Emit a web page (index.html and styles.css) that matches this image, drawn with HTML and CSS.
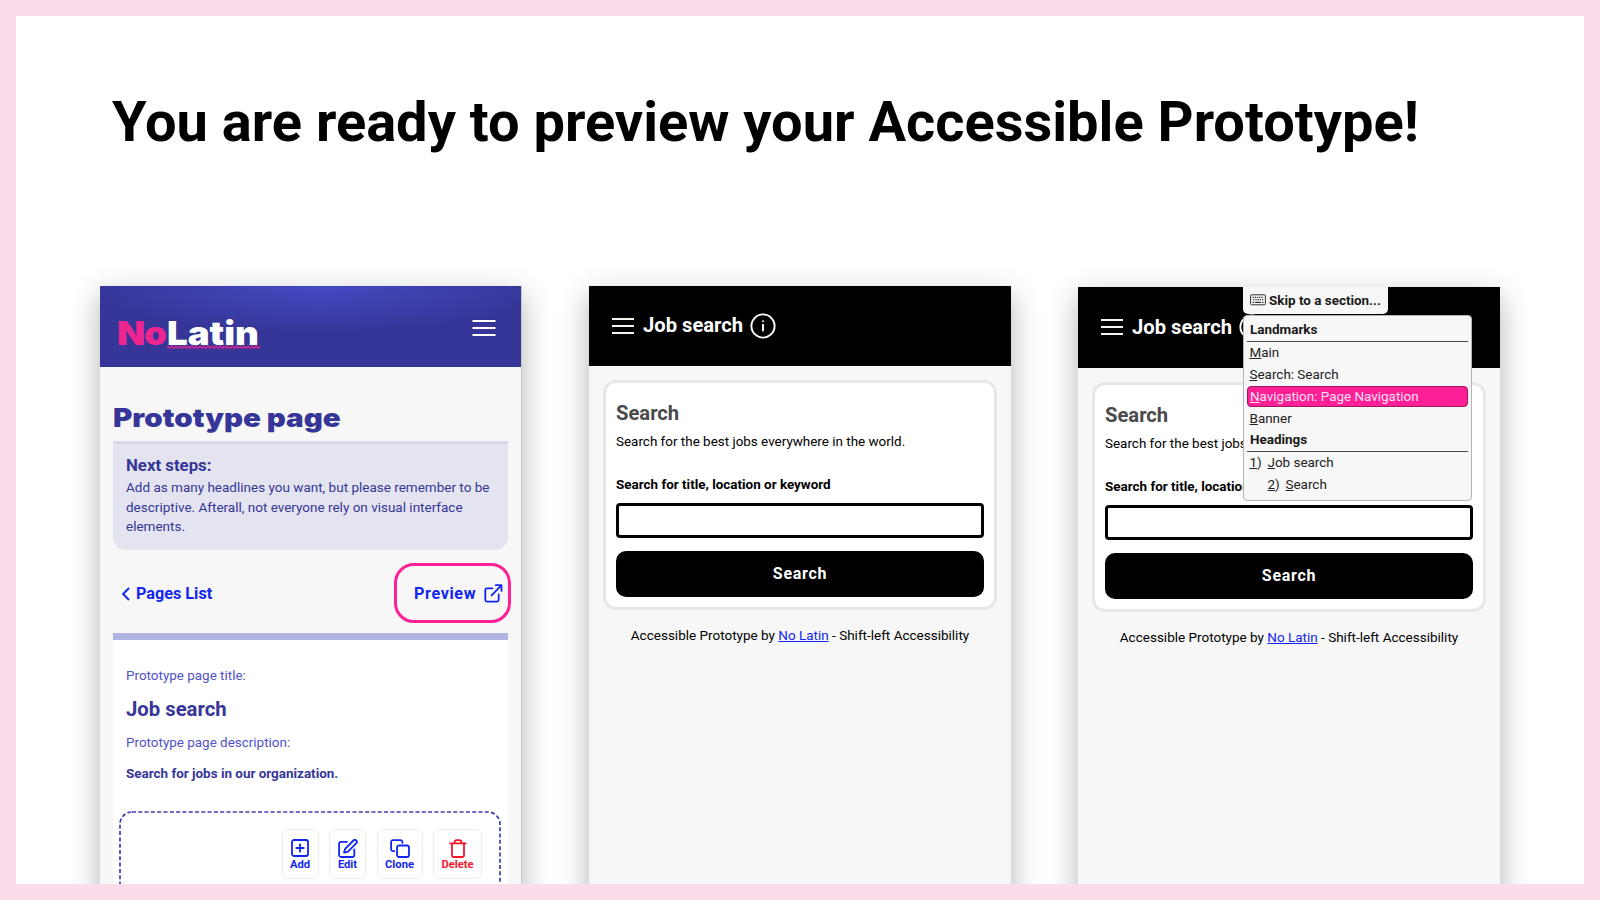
FILE: index.html
```html
<!DOCTYPE html>
<html lang="en">
<head>
<meta charset="utf-8">
<title>Accessible Prototype</title>
<link rel="stylesheet" href="styles.css">
</head>
<body>
<main class="slide">
  <h1 class="title">You are ready to preview your Accessible Prototype!</h1>
  <div class="phones">

    <section class="phone editor">
      <header class="brand-bar">
        <div class="logo"><span class="logo-no">No</span><span class="logo-latin">Latin<svg class="squiggle" width="84" height="4" viewBox="0 0 93 4" preserveAspectRatio="none"><defs><pattern id="wave" width="4" height="4" patternUnits="userSpaceOnUse"><path d="M-1 3.500 1 1l2 2.500L5 1" fill="none" stroke="#e5268f" stroke-width="1.100"/></pattern></defs><rect width="93" height="4" fill="url(#wave)"/></svg></span></div>
        <svg class="burger" width="24" height="18" viewBox="0 0 24 18"><path d="M1.300 2h21.400M1.300 9h21.400M1.300 16h21.400" stroke="#fff" stroke-width="2.200" stroke-linecap="round"/></svg>
      </header>
      <div class="editor-body">
        <h2 class="page-heading">Prototype page</h2>
        <div class="steps">
          <h3 class="steps-title">Next steps:</h3>
          <p class="steps-text">Add as many headlines you want, but please remember to be<br>descriptive. Afterall, not everyone rely on visual interface<br>elements.</p>
        </div>
        <nav class="actions">
          <a class="back"><svg width="8" height="14" viewBox="0 0 8 14"><path d="M7 1 1.200 7 7 13" fill="none" stroke="#1226f0" stroke-width="1.900"/></svg><span>Pages List</span></a>
          <a class="preview"><span class="preview-label">Preview</span><svg width="19" height="19" viewBox="0 0 19 19" fill="none" stroke="#1226f0" stroke-width="1.800" stroke-linecap="round" stroke-linejoin="round"><path d="M8.500 4.300H3A1.700 1.700 0 0 0 1.300 6v10A1.700 1.700 0 0 0 3 17.600h10a1.700 1.700 0 0 0 1.700-1.600v-5.500M11.800 1.200h5.700v5.700M17.300 1.400 7.600 11.300"/></svg></a>
        </nav>
        <div class="panel">
          <p class="field">Prototype page title:</p>
          <p class="field-title">Job search</p>
          <p class="field">Prototype page description:</p>
          <p class="field-strong">Search for jobs in our organization.</p>
          <div class="block">
            <svg class="dashes" width="382" height="120" viewBox="0 0 382 120"><rect x="1" y="1" width="380" height="140" rx="12" fill="none" stroke="#3d3fae" stroke-width="1.700" stroke-dasharray="4 2.300"/></svg>
            <div class="tools">
              <a class="tool add"><svg width="18" height="18" viewBox="0 0 18 18"><rect x="1" y="1" width="16" height="16" rx="2"/><path d="M9 5.300v7.400M5.300 9h7.400"/></svg><span>Add</span></a>
              <a class="tool edit"><svg width="20" height="19" viewBox="0 0 20 19"><path d="M9 2.800H3A1.900 1.900 0 0 0 1.100 4.700v11.400A1.900 1.900 0 0 0 3 18h11.400a1.900 1.900 0 0 0 1.900-1.900v-5.600M15.400 1.500a1.950 1.950 0 0 1 2.800 2.800l-8.500 8.500-3.600.9.900-3.600z"/></svg><span>Edit</span></a>
              <a class="tool clone"><svg width="20" height="19" viewBox="0 0 20 19"><rect x="7" y="6.500" width="12" height="11.500" rx="2"/><path d="M4.200 12.200H3a1.900 1.900 0 0 1-1.900-1.900V3A1.900 1.900 0 0 1 3 1.100h7.500A1.900 1.900 0 0 1 12.400 3v.8"/></svg><span>Clone</span></a>
              <a class="tool delete"><svg width="18" height="19" viewBox="0 0 18 19"><path d="M1.200 4.300h15.600M3 4.300v11.900A1.900 1.900 0 0 0 4.900 18h8.200a1.900 1.900 0 0 0 1.900-1.800V4.300M5.700 4.300V2.800a1.800 1.800 0 0 1 1.800-1.700h3a1.800 1.800 0 0 1 1.800 1.700v1.500"/></svg><span>Delete</span></a>
            </div>
          </div>
        </div>
      </div>
    </section>

    <section class="phone proto">
      <header class="job-bar">
        <svg width="24" height="18" viewBox="0 0 24 18"><path d="M1 2h22M1 9h22M1 16h22" stroke="#f4f4ee" stroke-width="2.200"/></svg>
        <span class="job-name">Job search</span>
        <svg width="26" height="26" viewBox="0 0 26 26" fill="none" stroke="#fff"><circle cx="13" cy="13" r="11.600" stroke-width="1.900"/><path d="M13 11v7.200" stroke-width="1.900"/><circle cx="13" cy="8.300" r=".7"/></svg>
      </header>
      <div class="card">
        <h2 class="card-title">Search</h2>
        <p class="card-text">Search for the best jobs everywhere in the world.</p>
        <p class="card-label">Search for title, location or keyword</p>
        <div class="input"></div>
        <div class="submit">Search</div>
      </div>
      <p class="credit">Accessible Prototype by <a>No Latin</a> - Shift-left Accessibility</p>
    </section>

    <section class="phone proto skip">
      <header class="job-bar">
        <svg width="24" height="18" viewBox="0 0 24 18"><path d="M1 2h22M1 9h22M1 16h22" stroke="#f4f4ee" stroke-width="2.200"/></svg>
        <span class="job-name">Job search</span>
        <svg width="26" height="26" viewBox="0 0 26 26" fill="none" stroke="#fff"><circle cx="13" cy="13" r="11.600" stroke-width="1.900"/></svg>
      </header>
      <div class="card">
        <h2 class="card-title">Search</h2>
        <p class="card-text">Search for the best jobs everywhere in the world.</p>
        <p class="card-label">Search for title, location or keyword</p>
        <div class="input"></div>
        <div class="submit">Search</div>
      </div>
      <p class="credit">Accessible Prototype by <a>No Latin</a> - Shift-left Accessibility</p>
      <div class="skipto">
        <div class="skip-tab"><svg width="16" height="12" viewBox="0 0 16 12" fill="none" stroke="#333"><rect x=".6" y=".8" width="14.800" height="10" rx="1" stroke-width="1"/><path d="M2.500 3.300h11M3.300 5.600h10" stroke-width="1.300" stroke-dasharray="1.300 .9"/><path d="M2.500 8.300h1.500M5 8.300h6M12 8.300h1.500" stroke-width="1.200"/></svg><span>Skip to a section...</span></div>
        <div class="skip-menu">
          <div class="group">Landmarks</div>
          <div class="item"><u>M</u>ain</div>
          <div class="item"><u>S</u>earch: Search</div>
          <div class="item active"><u>N</u>avigation: Page Navigation</div>
          <div class="item"><u>B</u>anner</div>
          <div class="group">Headings</div>
          <div class="item"><span class="num"><u>1</u>)</span><u>J</u>ob search</div>
          <div class="item nested"><span class="num"><u>2</u>)</span><u>S</u>earch</div>
        </div>
      </div>
    </section>
  </div>
</main>
</body>
</html>
```
FILE: styles.css
```css
* { box-sizing: border-box; }
body { margin: 0; width: 1600px; height: 900px; padding: 16px; background: #fbdcea; font-family: Roboto, "Liberation Sans", sans-serif; font-size: 13.450px; color: #000; overflow: hidden; }
h1, h2, h3, p { margin: 0; white-space: nowrap; }
svg { display: block; flex: none; }
.slide { width: 1568px; height: 868px; background: #fff; overflow: hidden; padding: 70px 84px 0; }
.title { height: 72px; line-height: 72px; padding-left: 12px; font-size: 56px; font-weight: 700; }
.phones { display: flex; gap: 67px; margin-top: 128px; }
.phone { width: 422px; height: 720px; flex: none; background: #f7f7f7; box-shadow: 0 10px 28px rgba(0, 0, 0, .3); }

.editor { border-right: 1px solid #c6c6c6; color: #353697; }
.brand-bar { height: 81px; padding: 0 25px 0 17px; display: flex; justify-content: space-between; align-items: center; background: radial-gradient(ellipse 230px 46px at 52% 0, #434ac2, #353697); }
.logo { padding-top: 13px; display: flex; gap: 1px; font: 900 33px/40px Inter, sans-serif; transform: scaleX(1.110); transform-origin: left; }
.logo-no { color: #ee2591; letter-spacing: -1px; }
.logo-latin { color: #fff; position: relative; }
.squiggle { position: absolute; left: 0; top: 32px; }
.burger { margin-top: 3px; }
.editor-body { padding: 34px 13px 0; }
.page-heading { font: 900 26px/33px Inter, sans-serif; transform: scaleX(1.135); transform-origin: left; }
.steps { height: 109px; margin-top: 7px; padding: 9px 13px 0; border-top: 3px solid #d7d6ec; background: #e4e4f0; border-radius: 0 0 13px 13px; }
.steps-title { font-size: 16.800px; line-height: 24px; font-weight: 700; }
.steps-text { margin-top: 1px; font-size: 13.500px; line-height: 19.600px; }
.actions { height: 83px; padding: 13px 0 0 9px; display: flex; justify-content: space-between; color: #1226f0; font-size: 16.200px; line-height: 24px; font-weight: 700; }
.back { height: 61px; display: flex; align-items: center; gap: 6px; }
.preview { width: 117px; height: 60px; margin-right: -3px; border: 3px solid #ff1f96; border-radius: 20px; display: flex; align-items: center; padding-left: 17px; gap: 8px; letter-spacing: .6px; }
.preview-label { padding-top: 2px; }
.panel { height: 300px; border-top: 7px solid #b1b4e3; background: #fff; padding: 26px 0 0 13px; }
.field { line-height: 20px; color: #5053c9; }
.field-title { margin: 10px 0 11px; font-size: 20.300px; line-height: 26px; font-weight: 700; }
.field-strong { margin-top: 11px; line-height: 20px; font-weight: 700; }
.block { position: relative; width: 382px; height: 120px; margin: 27px 0 0 -7px; padding: 18px 19px 0 0; }
.dashes { position: absolute; left: 0; top: 0; }
.tools { display: flex; justify-content: flex-end; gap: 10.500px; position: relative; }
.tool { height: 50px; border: 1.500px solid #ebeaf6; border-radius: 6px; display: flex; flex-direction: column; align-items: center; justify-content: space-between; padding: 9px 0 7px; font-size: 11.200px; line-height: 13px; font-weight: 700; color: #1226f0; }
.tool svg { fill: none; stroke: currentColor; stroke-width: 1.800; stroke-linecap: round; stroke-linejoin: round; }
.add { width: 37px; } .edit { width: 37px; } .clone { width: 46px; } .delete { width: 49px; color: #f5152b; }

.job-bar { height: 80px; background: #000; color: #fff; display: flex; align-items: center; padding: 0 0 1px 22px; }
.job-name { margin: 0 7px 0 8px; padding-bottom: 1px; font-size: 20.200px; line-height: 26px; font-weight: 700; }
.card { width: 394px; height: 230px; margin: 14px 0 0 14px; border: 3px solid #e7e7e7; border-radius: 13px; background: #fff; padding: 17px 10px 0; }
.card-title { font-size: 20.200px; line-height: 26px; font-weight: 700; color: #4a4a4a; }
.card-text { margin-top: 6px; line-height: 20px; }
.card-label { margin-top: 23px; line-height: 20px; font-weight: 700; }
.input { height: 35px; margin-top: 7.500px; border: 3px solid #000; border-radius: 4px; }
.submit { height: 46px; margin-top: 13.500px; border-radius: 10px; background: #000; color: #fff; font-size: 16px; line-height: 46px; font-weight: 700; text-align: center; letter-spacing: .7px; }
.credit { margin-top: 15px; line-height: 20px; text-align: center; font-size: 13.500px; }
.credit a { color: #1226f0; text-decoration: underline; }

.skip { position: relative; margin-top: 1px; }
.skip .job-bar { height: 81px; }
.skipto { position: absolute; left: 165px; top: 0; width: 229px; font-size: 13.450px; color: #222; }
.skip-tab { width: 145px; height: 27px; background: #f7f7f7; border-radius: 0 0 5px 5px; display: flex; align-items: center; gap: 3px; padding: 0 0 1px 7px; font-weight: 700; white-space: nowrap; color: #1a1a1a; }
.skip-menu { height: 186px; margin-top: 1px; padding: 4px 3px 0; background: #f7f7f7; border: 1px solid #b5b5b5; border-radius: 4px; }
.group { height: 22px; line-height: 20px; padding-left: 3px; border-bottom: 1px solid #444; font-weight: 700; color: #1a1a1a; }
.item { height: 22px; line-height: 21px; padding-left: 2.500px; display: flex; white-space: pre; }
.item.active { height: 21px; line-height: 19px; border: 1px solid #a0185f; border-radius: 4px; background: #ff1f96; color: #ffe0f0; padding-left: 2px; margin-bottom: 1px; }
.num { width: 18px; }
.nested { padding-left: 20.500px; }
```
